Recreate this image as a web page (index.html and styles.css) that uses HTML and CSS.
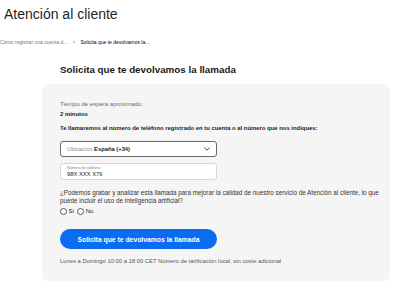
FILE: index.html
```html
<!DOCTYPE html>
<html lang="es">
<head>
<meta charset="utf-8">
<title>Atención al cliente</title>
<link rel="stylesheet" href="styles.css">
</head>
<body>
<header class="top">
  <h1 class="title">Atención al cliente</h1>
  <nav class="crumbs">
    <span class="crumb-link">Cómo registrar una cuenta d...</span>
    <span class="crumb-sep">&gt;</span>
    <span class="crumb-current">Solicita que te devolvamos la...</span>
  </nav>
</header>
<main class="main">
  <h2 class="heading">Solicita que te devolvamos la llamada</h2>
  <section class="card">
    <p class="muted">Tiempo de espera aproximado:</p>
    <p class="strong wait">2 minutos</p>
    <p class="strong intro">Te llamaremos al número de teléfono registrado en tu cuenta o al número que nos indiques:</p>
    <div class="select">
      <span class="select-text"><span class="select-label">Ubicación</span> <b>España (+34)</b></span>
      <svg class="chevron" viewBox="0 0 10 6" width="6" height="4"><path d="M1 1 L5 5 L9 1" fill="none" stroke="#222" stroke-width="1.4" stroke-linecap="round" stroke-linejoin="round"/></svg>
    </div>
    <div class="phone">
      <span class="phone-label">Número de teléfono</span>
      <span class="phone-value">98X XXX X76</span>
    </div>
    <p class="question">¿Podemos grabar y analizar esta llamada para mejorar la calidad de nuestro servicio de Atención al cliente, lo que puede incluir el uso de inteligencia artificial?</p>
    <div class="radios">
      <label class="radio"><span class="circle"></span>Sí</label>
      <label class="radio"><span class="circle"></span>No</label>
    </div>
    <button class="cta">Solicita que te devolvamos la llamada</button>
    <p class="foot">Lunes a Domingo 10:00 a 18:00 CET Número de tarificación local, sin coste adicional</p>
  </section>
</main>
</body>
</html>
```
FILE: styles.css
```css
* { box-sizing: border-box; }
html, body { margin: 0; padding: 0; background: #fff; }
body {
  font-family: "Liberation Sans", Arial, sans-serif;
  color: #1a1a1a;
  width: 400px;
  height: 295px;
  overflow: hidden;
}
p { margin: 0; }
.top { padding-left: 4px; }
.title {
  margin: 6px 0 0 0;
  font-size: 14px;
  line-height: 16px;
  font-weight: normal;
  color: #1f1f1f;
}
.crumbs {
  margin-top: 17px;
  margin-left: -4px;
  font-size: 5px;
  line-height: 6px;
  display: flex;
  gap: 5px;
  white-space: nowrap;
}
.crumb-link { color: #777; }
.crumb-sep { color: #777; }
.crumb-current { color: #000; }
.main { margin-left: 42px; width: 348px; }
.heading {
  margin: 19px 0 0 0;
  padding-left: 18px;
  font-size: 9.8px;
  line-height: 12px;
  font-weight: bold;
  color: #1a1a1a;
}
.card {
  margin-top: 8px;
  background: #f5f5f5;
  border-radius: 6px;
  padding: 16px 3px 16px 18px;
  height: 197px;
}
.muted { font-size: 6px; line-height: 8px; color: #6b6b6b; }
.strong { font-size: 5.9px; line-height: 8px; font-weight: bold; color: #1a1a1a; }
.wait { margin-top: 2px; }
.intro { margin-top: 6px; }
.select {
  margin-top: 9px;
  width: 157px;
  height: 16px;
  background: #fff;
  border: 0.8px solid #6a6a6a;
  border-radius: 3px;
  display: flex;
  align-items: center;
  justify-content: space-between;
  padding: 0 6px 0 6px;
  font-size: 5.8px;
}
.select-label { color: #888; }
.select-text b { color: #1a1a1a; }
.chevron { display: block; }
.phone {
  margin-top: 6px;
  width: 157px;
  height: 17px;
  background: #fff;
  border: 0.8px solid #d6d6d6;
  border-radius: 3px;
  display: flex;
  flex-direction: column;
  justify-content: center;
  padding: 0 6px;
}
.phone-label { font-size: 3.8px; line-height: 5px; color: #888; }
.phone-value { font-size: 5.8px; line-height: 7px; color: #1a1a1a; }
.question {
  margin-top: 9px;
  font-size: 6.3px;
  line-height: 8px;
  color: #333;
}
.radios {
  margin-top: 2px;
  height: 8px;
  display: flex;
  align-items: center;
  gap: 3px;
  font-size: 6px;
  color: #1a1a1a;
}
.radio { display: flex; align-items: center; gap: 1.5px; }
.circle {
  width: 7px;
  height: 7px;
  border-radius: 50%;
  border: 0.7px solid #555;
  background: #fff;
}
.cta {
  display: block;
  margin-top: 14px;
  width: 157px;
  height: 20px;
  border: none;
  border-radius: 10px;
  background: #0b6cf2;
  color: #fff;
  font-family: "Liberation Sans", Arial, sans-serif;
  font-weight: bold;
  font-size: 6.8px;
  padding: 0;
}
.foot {
  margin-top: 7.5px;
  font-size: 5.85px;
  line-height: 8px;
  color: #555;
}
```
